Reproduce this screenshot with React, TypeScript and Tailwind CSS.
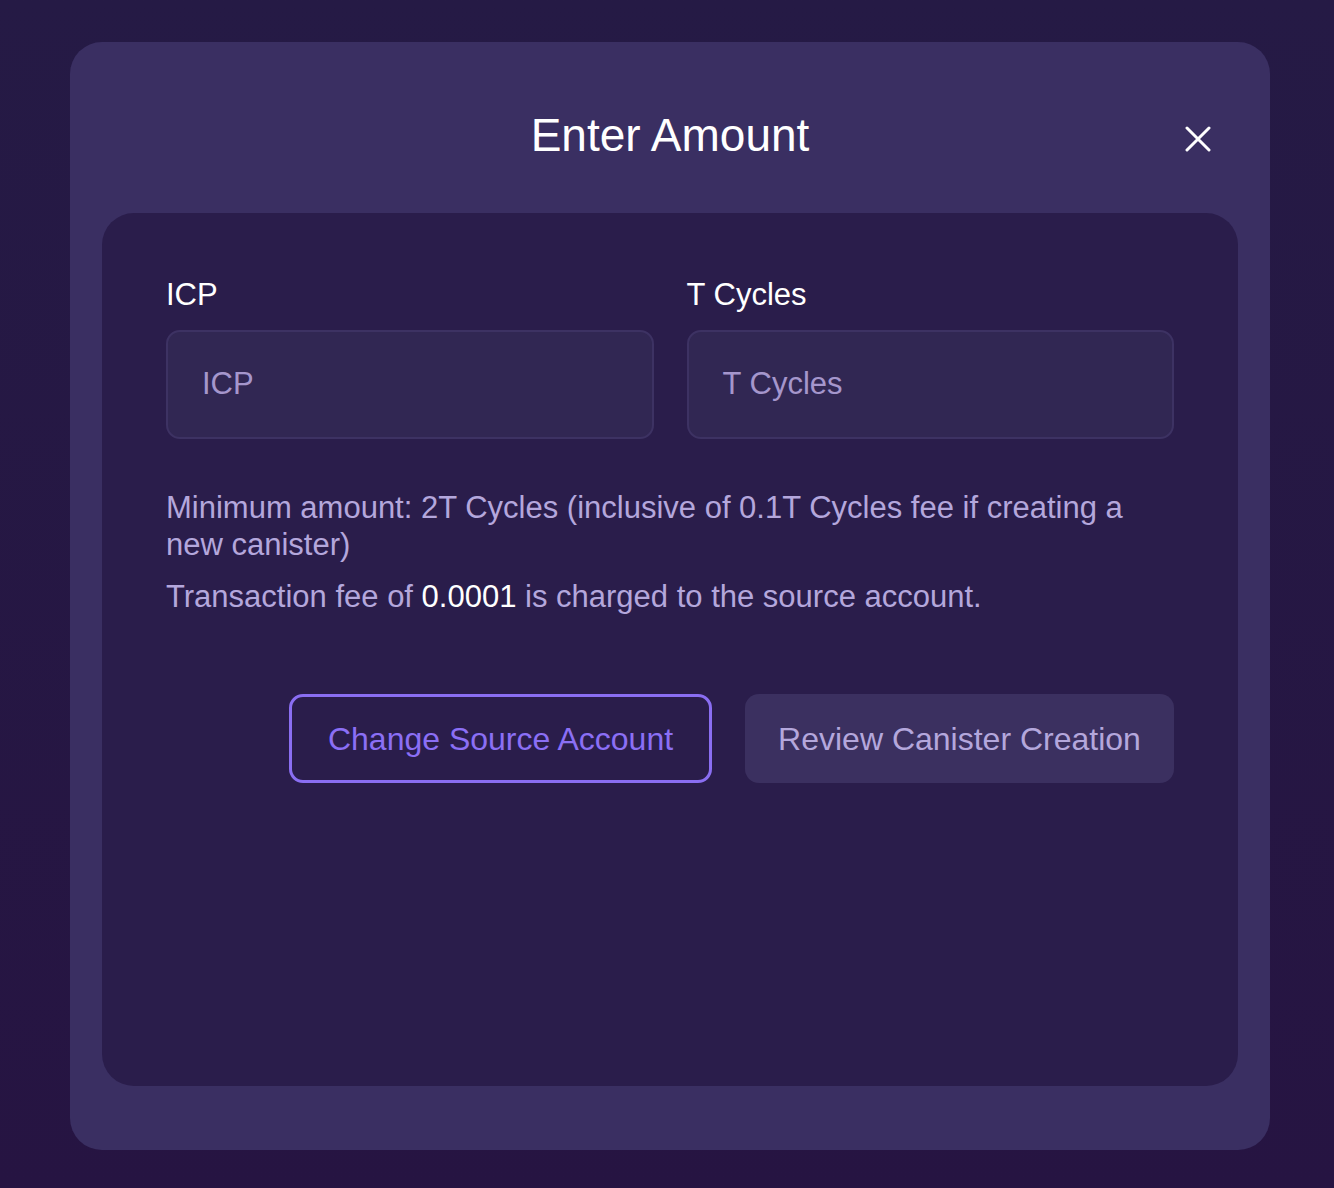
import React from "react";

export default function App() {
  return (
    <div
      className="w-[1334px] h-[1188px] overflow-hidden bg-gradient-to-b from-[#251a45] to-[#261442] pt-[42px] pl-[70px]"
      style={{ fontFamily: '"Liberation Sans", Arial, sans-serif' }}
    >
      <div className="w-[1200px] h-[1108px] rounded-[32px] bg-[#3a2f62] px-[32px] pb-[64px] flex flex-col">
        <div className="relative h-[171px] flex items-center justify-center">
          <h1 className="text-[46px] text-white leading-none mt-[14px]">Enter Amount</h1>
          <button className="absolute right-[27px] top-[84px] w-[26px] h-[26px] flex items-center justify-center">
            <svg width="26" height="26" viewBox="0 0 26 26" fill="none">
              <path d="M2 2 L24 24 M24 2 L2 24" stroke="white" strokeWidth="3" strokeLinecap="round" />
            </svg>
          </button>
        </div>
        <div className="flex-1 rounded-[32px] bg-[#2a1d4b] px-[64px] pt-[64px]">
          <div className="grid grid-cols-2 gap-[33px]">
            <div className="flex flex-col">
              <label className="text-[31px] text-white leading-[36px] mb-[17px]">ICP</label>
              <div className="h-[109px] rounded-[14px] border-2 border-[#3d3263] bg-[#312753] flex items-center px-[34px]">
                <span className="text-[31px] text-[#a596cc]">ICP</span>
              </div>
            </div>
            <div className="flex flex-col">
              <label className="text-[31px] text-white leading-[36px] mb-[17px]">T Cycles</label>
              <div className="h-[109px] rounded-[14px] border-2 border-[#3d3263] bg-[#312753] flex items-center px-[34px]">
                <span className="text-[31px] text-[#a596cc]">T Cycles</span>
              </div>
            </div>
          </div>
          <p className="mt-[50px] text-[31px] leading-[37px] text-[#b4a7dc]">
            Minimum amount: 2T Cycles (inclusive of 0.1T Cycles fee if creating a new canister)
          </p>
          <p className="mt-[15px] text-[31px] leading-[37px] text-[#b4a7dc]">
            Transaction fee of <span className="text-white">0.0001</span> is charged to the source account.
          </p>
          <div className="mt-[79px] flex justify-end gap-[33px]">
            <button className="w-[423px] h-[89px] rounded-[14px] border-[3px] border-[#8a6ef2] text-[#8b6ff5] text-[32px]">
              Change Source Account
            </button>
            <button className="w-[429px] h-[89px] rounded-[14px] bg-[#3b3060] text-[#b4a7dc] text-[32px]">
              Review Canister Creation
            </button>
          </div>
        </div>
      </div>
    </div>
  );
}
